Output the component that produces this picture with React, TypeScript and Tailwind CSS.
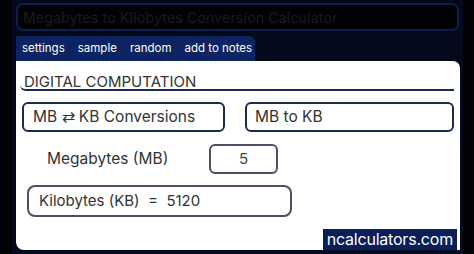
import React from "react";

export default function App() {
  const font = { fontFamily: "Inter, 'Noto Sans', sans-serif" };
  return (
    <div className="w-[474px] h-[254px] bg-[#020308] overflow-hidden" style={font}>
      <div className="ml-[12px] w-[451px] h-[254px] bg-[#040a1c] pt-[3px] px-[4px] flex flex-col">
        <div className="h-[28px] rounded-[7px] border-2 border-[#0c1f4d] bg-[#020204] flex items-center pl-[5px]">
          <span className="text-[14px] text-[#1c1c1c] tracking-[0.2px]">Megabytes to Kilobytes Conversion Calculator</span>
        </div>
        <div className="mt-[5px] flex">
          <div className="h-[25px] w-[239px] bg-[#0c2562] rounded-tr-[6px] flex items-center gap-[13px] pl-[6px] text-white text-[11.5px]">
            <span>settings</span>
            <span>sample</span>
            <span>random</span>
            <span>add to notes</span>
          </div>
        </div>
        <div className="bg-white w-[444px] h-[189px] rounded-tr-[7px] rounded-bl-[8px] flex flex-col px-[6px]">
          <div className="-ml-[2px] pt-[11px] pl-[4px] h-[30px] border-b-2 border-[#1c2a50] rounded-bl-[6px] text-[15px] text-[#333] leading-[20px]">
            DIGITAL COMPUTATION
          </div>
          <div className="mt-[11px] flex gap-[20px]">
            <div className="w-[206px] h-[30px] border-2 border-[#1c2a50] rounded-[6px] flex items-center pl-[9px] text-[15.5px] text-[#333]">
              MB ⇄ KB Conversions
            </div>
            <div className="w-[212px] h-[30px] border-2 border-[#1c2a50] rounded-[6px] flex items-center pl-[8px] text-[15.5px] text-[#333]">
              MB to KB
            </div>
          </div>
          <div className="mt-[12px] flex items-center">
            <div className="w-[187px] pl-[25px] text-[15.5px] text-[#333]">Megabytes (MB)</div>
            <div className="w-[69px] h-[30px] border-2 border-[#4a5068] rounded-[6px] flex items-center justify-center text-[15px] text-[#444]">
              5
            </div>
          </div>
          <div className="mt-[11px] ml-[5px] w-[265px] h-[34px] border-2 border-[#4a5068] rounded-[8px] flex items-center pl-[10px] text-[15px] text-[#333] whitespace-pre">
            Kilobytes (KB)  =  5120
          </div>
          <div className="flex justify-end mt-[12px] -mr-[3px]">
            <div className="bg-[#0a1f5a] text-white text-[16px] leading-[21px] px-[4px] tracking-[-0.2px]">ncalculators.com</div>
          </div>
        </div>
      </div>
    </div>
  );
}
